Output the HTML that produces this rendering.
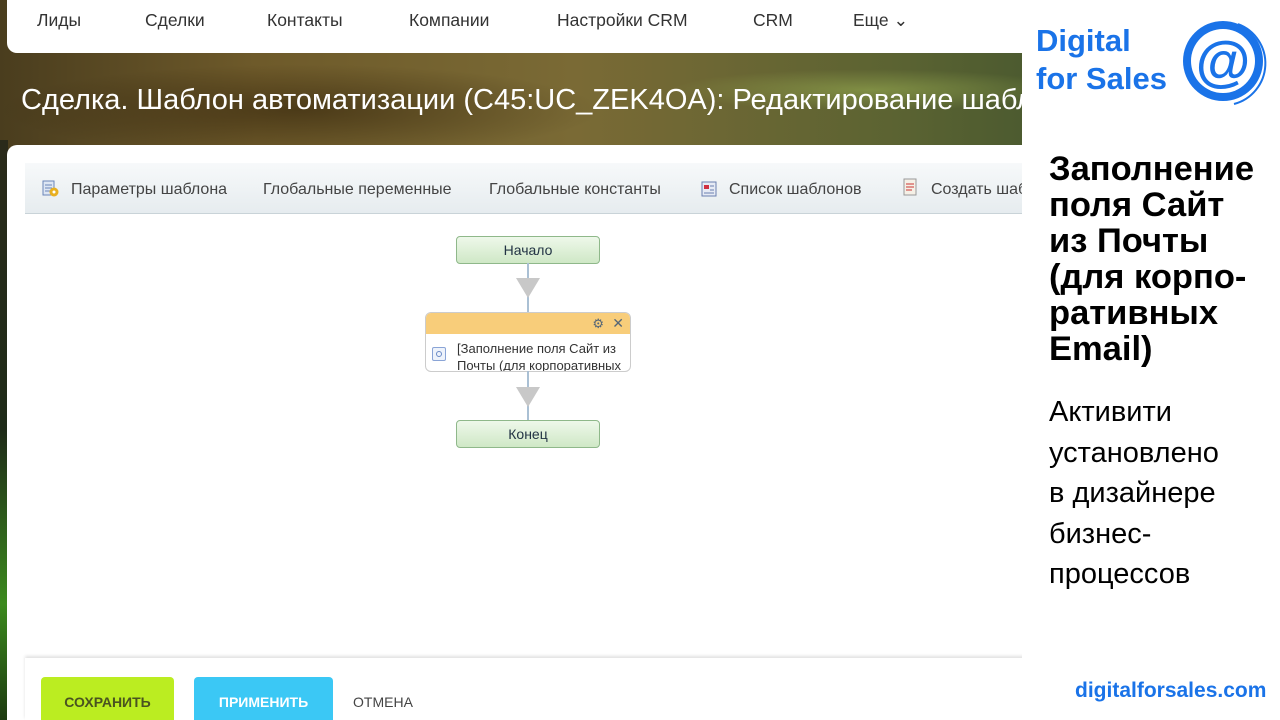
<!DOCTYPE html>
<html><head><meta charset="utf-8"><style>
html,body{margin:0;width:1280px;height:720px;overflow:hidden;}
body{position:relative;font-family:"Liberation Sans","DejaVu Sans",sans-serif;background:linear-gradient(90deg,#4a3d1e 0%,#6e5a2a 20%,#7a6a35 45%,#5b6332 70%,#2f4a2a 100%);}
.bg2{position:absolute;left:0;top:0;width:1022px;height:160px;background:radial-gradient(ellipse at 870px 90px,rgba(150,170,80,.6),transparent 200px),radial-gradient(ellipse at 300px 110px,rgba(40,25,5,.5),transparent 300px);}
.strip{position:absolute;left:0;top:140px;width:8px;height:580px;background:linear-gradient(180deg,#2a2a1a 0%,#1e2a18 50%,#3c8a1e 80%,#1d3a10 100%);}
.nav{position:absolute;left:7px;top:-10px;width:1030px;height:63px;background:#fff;border-radius:10px;}
.nav span{position:absolute;top:20px;font-size:17.5px;color:#333;}
.title{position:absolute;left:21px;top:84px;font-size:29px;color:#fff;white-space:nowrap;}
.panel{position:absolute;left:7px;top:145px;width:1030px;height:575px;background:#fff;border-radius:10px 10px 0 0;}
.tb{position:absolute;left:25px;top:163px;width:1000px;height:50px;background:linear-gradient(#f7f9fa,#e6ecef);border-bottom:1px solid #c9d3d8;}
.tb span{position:absolute;top:18px;font-size:16px;color:#444;white-space:nowrap;}
.ic{position:absolute;width:18px;height:18px;}
.node{position:absolute;left:456px;width:142px;height:26px;border:1px solid #8fb88a;border-radius:4px;background:linear-gradient(#eef8ea,#cfe8c6);text-align:center;line-height:26px;font-size:14px;color:#234;}
.line{position:absolute;left:527px;width:2px;background:#aac0d4;}
.tri{position:absolute;left:516px;width:0;height:0;border-left:12px solid transparent;border-right:12px solid transparent;border-top:20px solid #c8c8c8;}
.act{position:absolute;left:425px;top:312px;width:204px;height:58px;border:1px solid #ccc;border-radius:6px;background:#fff;overflow:hidden;}
.act .h{height:21px;background:#f8cd7a;}
.act .t{position:absolute;left:31px;top:27px;font-size:13px;line-height:17px;color:#333;white-space:nowrap;}
.foot{position:absolute;left:25px;top:658px;width:1000px;height:62px;background:#fff;box-shadow:0 -2px 3px rgba(0,0,0,.12);}
.btn{position:absolute;top:677px;height:50px;border-radius:4px;font-size:14px;font-weight:bold;line-height:50px;text-align:center;}
.right{position:absolute;left:1022px;top:0;width:258px;height:720px;background:#fff;}
.h1{position:absolute;left:1049px;top:151px;font-size:34.5px;font-weight:bold;line-height:36px;color:#000;}
.h2{position:absolute;left:1049px;top:392px;font-size:29px;line-height:40.5px;color:#000;}
</style></head><body>
<div class="bg2"></div><div class="strip"></div>
<div class="nav">
<span style="left:30px">Лиды</span><span style="left:138px">Сделки</span><span style="left:260px">Контакты</span><span style="left:402px">Компании</span><span style="left:550px">Настройки CRM</span><span style="left:746px">CRM</span><span style="left:846px">Еще ⌄</span>
</div>
<div class="title">Сделка. Шаблон автоматизации (C45:UC_ZEK4OA): Редактирование шаблона</div>
<div class="panel"></div>
<div class="tb">
<svg class="ic" style="left:17px;top:17px" viewBox="0 0 18 18"><rect x="1" y="1" width="11" height="14" fill="#dde6f3" stroke="#6a86b8"/><path d="M3 5h7M3 8h7M3 11h5" stroke="#6a86b8"/><circle cx="12" cy="12" r="4.5" fill="#e8b020"/><circle cx="12" cy="12" r="1.5" fill="#fff"/></svg>
<span style="left:46px">Параметры шаблона</span>
<span style="left:238px">Глобальные переменные</span>
<span style="left:464px">Глобальные константы</span>
<svg class="ic" style="left:675px;top:17px" viewBox="0 0 18 18"><rect x="2" y="2" width="14" height="14" fill="#e6ebf5" stroke="#6a7fb0"/><rect x="4" y="5" width="5" height="4" fill="#d03040"/><path d="M10 6h4M10 10h4M4 13h10" stroke="#6a7fb0"/></svg>
<span style="left:704px">Список шаблонов</span>
<svg class="ic" style="left:877px;top:15px" viewBox="0 0 18 18"><rect x="2" y="1" width="12" height="16" fill="#f5f0e6" stroke="#999"/><path d="M4 6h8M4 9h8M4 12h6" stroke="#c33"/></svg>
<span style="left:906px">Создать шаблон</span>
</div>
<div class="node" style="top:236px">Начало</div>
<div class="line" style="top:263px;height:50px"></div>
<div class="tri" style="top:278px"></div>
<div class="act"><div class="h"></div>
<div style="position:absolute;right:26px;top:3px;color:#567;font-size:13px">⚙</div>
<div style="position:absolute;right:6px;top:2px;color:#567;font-size:14px">✕</div>
<div style="position:absolute;left:6px;top:34px;width:12px;height:12px;border:1px solid #8aa4d6;border-radius:2px;background:#eef3fb"><div style="margin:3px;width:4px;height:4px;border:1px solid #6a8ac6;border-radius:50%"></div></div>
<div class="t">[Заполнение поля Сайт из<br>Почты (для корпоративных</div></div>
<div class="line" style="top:371px;height:50px"></div>
<div class="tri" style="top:387px"></div>
<div class="node" style="top:420px">Конец</div>
<div class="foot"></div>
<div class="btn" style="left:41px;width:133px;background:#bbed21;color:#4a5320">СОХРАНИТЬ</div>
<div class="btn" style="left:194px;width:139px;background:#3bc8f5;color:#fff">ПРИМЕНИТЬ</div>
<div class="btn" style="left:345px;width:76px;color:#444;font-weight:normal">ОТМЕНА</div>
<div class="right"></div>
<div style="position:absolute;left:1036px;top:22px;font-size:31px;font-weight:bold;line-height:38px;color:#1a73e8">Digital<br>for Sales</div>
<svg style="position:absolute;left:1180px;top:18px" width="90" height="90" viewBox="0 0 90 90">
<circle cx="43" cy="43" r="40" fill="#1a73e8"/><circle cx="43" cy="43" r="32" fill="#fff"/>
<text x="43" y="62" text-anchor="middle" font-size="56" font-weight="bold" fill="#1a73e8" font-family="Liberation Sans">@</text>
<path d="M58 6 A42 42 0 0 1 54 86" stroke="#1a73e8" stroke-width="2" fill="none"/></svg>
<div class="h1">Заполнение<br>поля Сайт<br>из Почты<br>(для корпо-<br>ративных<br>Email)</div>
<div class="h2">Активити<br>установлено<br>в дизайнере<br>бизнес-<br>процессов</div>
<div style="position:absolute;left:1075px;top:679px;font-size:21px;font-weight:bold;color:#1a73e8">digitalforsales.com</div>
</body></html>
